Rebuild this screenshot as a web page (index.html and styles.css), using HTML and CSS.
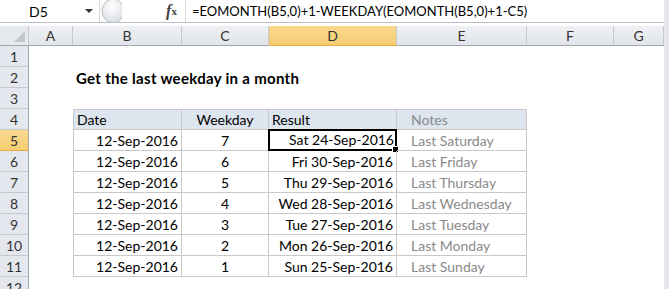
FILE: index.html
```html
<!DOCTYPE html>
<html lang="en">
<head>
    <meta charset="UTF-8">
    <meta name="viewport" content="width=device-width, initial-scale=1.0">
    <title>Get the last weekday in a month</title>
    <link rel="stylesheet" href="styles.css">
</head>
<body>
    <div class="window">
        <div class="formula-bar">
            <div class="name-box">
                <span class="name">D5</span>
                <span class="arrow"></span>
            </div>
            <div class="grip">
                <svg width="22" height="22" viewBox="0 0 22 22">
                    <defs>
                        <radialGradient id="g" cx="0.45" cy="0.3" r="0.7">
                            <stop offset="0" stop-color="#ffffff"/>
                            <stop offset="1" stop-color="#d9dde2"/>
                        </radialGradient>
                    </defs>
                    <ellipse cx="13" cy="11" rx="11" ry="12" fill="url(#g)" stroke="#b9bfc6"/>
                </svg>
            </div>
            <div class="fx"><i>f</i><sub>x</sub></div>
            <div class="formula">=EOMONTH(B5,0)+1-WEEKDAY(EOMONTH(B5,0)+1-C5)</div>
        </div>

        <div class="sheet">
            <!-- column headers -->
            <div class="corner"></div>
            <div class="col-head">A</div>
            <div class="col-head">B</div>
            <div class="col-head">C</div>
            <div class="col-head selected">D</div>
            <div class="col-head">E</div>
            <div class="col-head">F</div>
            <div class="col-head">G</div>

            <div class="row-head">1</div>
            <div class="cell"></div><div class="cell"></div><div class="cell"></div><div class="cell"></div><div class="cell"></div><div class="cell"></div><div class="cell"></div>

            <div class="row-head">2</div>
            <div class="cell"></div>
            <div class="cell title">Get the last weekday in a month</div>
            <div class="cell"></div><div class="cell"></div><div class="cell"></div><div class="cell"></div><div class="cell"></div>

            <div class="row-head">3</div>
            <div class="cell"></div><div class="cell"></div><div class="cell"></div><div class="cell"></div><div class="cell"></div><div class="cell"></div><div class="cell"></div>

            <div class="row-head">4</div>
            <div class="cell"></div>
            <div class="cell t th first">Date</div>
            <div class="cell t th center">Weekday</div>
            <div class="cell t th">Result</div>
            <div class="cell t th note">Notes</div>
            <div class="cell"></div><div class="cell"></div>

            <div class="row-head selected">5</div>
            <div class="cell"></div>
            <div class="cell t first right">12-Sep-2016</div>
            <div class="cell t center">7</div>
            <div class="cell t right active">Sat 24-Sep-2016<span class="handle"></span></div>
            <div class="cell t note">Last Saturday</div>
            <div class="cell"></div><div class="cell"></div>

            <div class="row-head">6</div>
            <div class="cell"></div>
            <div class="cell t first right">12-Sep-2016</div>
            <div class="cell t center">6</div>
            <div class="cell t right">Fri 30-Sep-2016</div>
            <div class="cell t note">Last Friday</div>
            <div class="cell"></div><div class="cell"></div>

            <div class="row-head">7</div>
            <div class="cell"></div>
            <div class="cell t first right">12-Sep-2016</div>
            <div class="cell t center">5</div>
            <div class="cell t right">Thu 29-Sep-2016</div>
            <div class="cell t note">Last Thursday</div>
            <div class="cell"></div><div class="cell"></div>

            <div class="row-head">8</div>
            <div class="cell"></div>
            <div class="cell t first right">12-Sep-2016</div>
            <div class="cell t center">4</div>
            <div class="cell t right">Wed 28-Sep-2016</div>
            <div class="cell t note">Last Wednesday</div>
            <div class="cell"></div><div class="cell"></div>

            <div class="row-head">9</div>
            <div class="cell"></div>
            <div class="cell t first right">12-Sep-2016</div>
            <div class="cell t center">3</div>
            <div class="cell t right">Tue 27-Sep-2016</div>
            <div class="cell t note">Last Tuesday</div>
            <div class="cell"></div><div class="cell"></div>

            <div class="row-head">10</div>
            <div class="cell"></div>
            <div class="cell t first right">12-Sep-2016</div>
            <div class="cell t center">2</div>
            <div class="cell t right">Mon 26-Sep-2016</div>
            <div class="cell t note">Last Monday</div>
            <div class="cell"></div><div class="cell"></div>

            <div class="row-head">11</div>
            <div class="cell"></div>
            <div class="cell t first right">12-Sep-2016</div>
            <div class="cell t center">1</div>
            <div class="cell t right">Sun 25-Sep-2016</div>
            <div class="cell t note">Last Sunday</div>
            <div class="cell"></div><div class="cell"></div>

            <div class="row-head">12</div>
            <div class="cell"></div><div class="cell"></div><div class="cell"></div><div class="cell"></div><div class="cell"></div><div class="cell"></div><div class="cell"></div>
        </div>
    </div>
</body>
</html>
```

FILE: styles.css
```css
body {
    margin: 0;
    font-family: Lato, "Noto Sans", sans-serif;
    font-size: 14px;
    color: #000;
    background-color: #fff;
    overflow: hidden;
}
.window {
    width: 664px;
    height: 289px;
    border-right: 5px solid #e3e6ea;
    overflow: hidden;
}

/* formula bar */
.formula-bar {
    display: flex;
    height: 22px;
    border-bottom: 1px solid #b7bec7;
    background-color: #fff;
}
.name-box {
    width: 100px;
    display: flex;
    align-items: center;
    border-right: 1px solid #d5d9de;
    box-sizing: border-box;
}
.name {
    flex: 1;
    text-align: center;
    padding-right: 8px;
    font-size: 14px;
}
.arrow {
    width: 0;
    height: 0;
    border-left: 4px solid transparent;
    border-right: 4px solid transparent;
    border-top: 4px solid #333;
    margin-right: 6px;
}
.grip {
    width: 58px;
    display: flex;
    align-items: center;
    overflow: hidden;
    background-color: #fff;
}
.fx {
    width: 28px;
    display: flex;
    align-items: center;
    justify-content: center;
    font-family: "Liberation Serif", serif;
    font-size: 16px;
    font-weight: bold;
    color: #444;
    border-right: 1px solid #d5d9de;
    box-sizing: border-box;
}
.fx sub {
    font-size: 11px;
    vertical-align: -2px;
}
.formula {
    flex: 1;
    display: flex;
    align-items: center;
    padding-left: 6px;
    font-size: 13px;
    white-space: nowrap;
}

/* grid */
.sheet {
    margin-top: 3px;
    display: grid;
    grid-template-columns: 29px 44px 109px 87px 128px 130px 87px 50px;
    grid-template-rows: 20px;
    grid-auto-rows: 21px;
}
.corner {
    background-color: #e6e9ed;
    border-right: 1px solid #c5c9ce;
    border-bottom: 1px solid #9ea6b0;
    box-sizing: border-box;
    position: relative;
}
.corner::after {
    content: "";
    position: absolute;
    right: 3px;
    bottom: 3px;
    border-left: 11px solid transparent;
    border-bottom: 11px solid #c3c8ce;
}
.col-head {
    background: linear-gradient(#eef0f3, #e2e5e9);
    border-right: 1px solid #c5c9ce;
    border-bottom: 1px solid #9ea6b0;
    box-sizing: border-box;
    display: flex;
    align-items: center;
    justify-content: center;
    color: #333;
    font-size: 14px;
}
.row-head {
    background-color: #e4e8ee;
    border-right: 1px solid #9ea6b0;
    border-bottom: 1px solid #c5c9ce;
    box-sizing: border-box;
    display: flex;
    align-items: center;
    justify-content: center;
    color: #333;
    font-size: 14px;
}
.col-head.selected,
.row-head.selected {
    background: linear-gradient(#f9d98f, #f6cd71);
    border-bottom-color: #e2a93c;
}
.cell {
    box-sizing: border-box;
    display: flex;
    align-items: flex-end;
    padding: 0 3px 1px 3px;
    white-space: nowrap;
    position: relative;
}
.title {
    font-weight: bold;
    font-size: 15px;
    letter-spacing: 0.3px;
    overflow: visible;
}
.t {
    border-right: 1px solid #c9c9c9;
    border-bottom: 1px solid #c9c9c9;
}
.t.first {
    border-left: 1px solid #c9c9c9;
}
.th {
    background-color: #dde5ef;
    border-top: 1px solid #c9c9c9;
}
.right {
    justify-content: flex-end;
}
.center {
    justify-content: center;
}
.note {
    color: #8a8a8a;
    padding-left: 14px;
}
.active {
    border: 2px solid #000;
    margin: -1px 0 0 -1px;
    padding-right: 1px;
}
.handle {
    position: absolute;
    right: -4px;
    bottom: -4px;
    width: 5px;
    height: 5px;
    background-color: #000;
    border: 1px solid #fff;
}
```
